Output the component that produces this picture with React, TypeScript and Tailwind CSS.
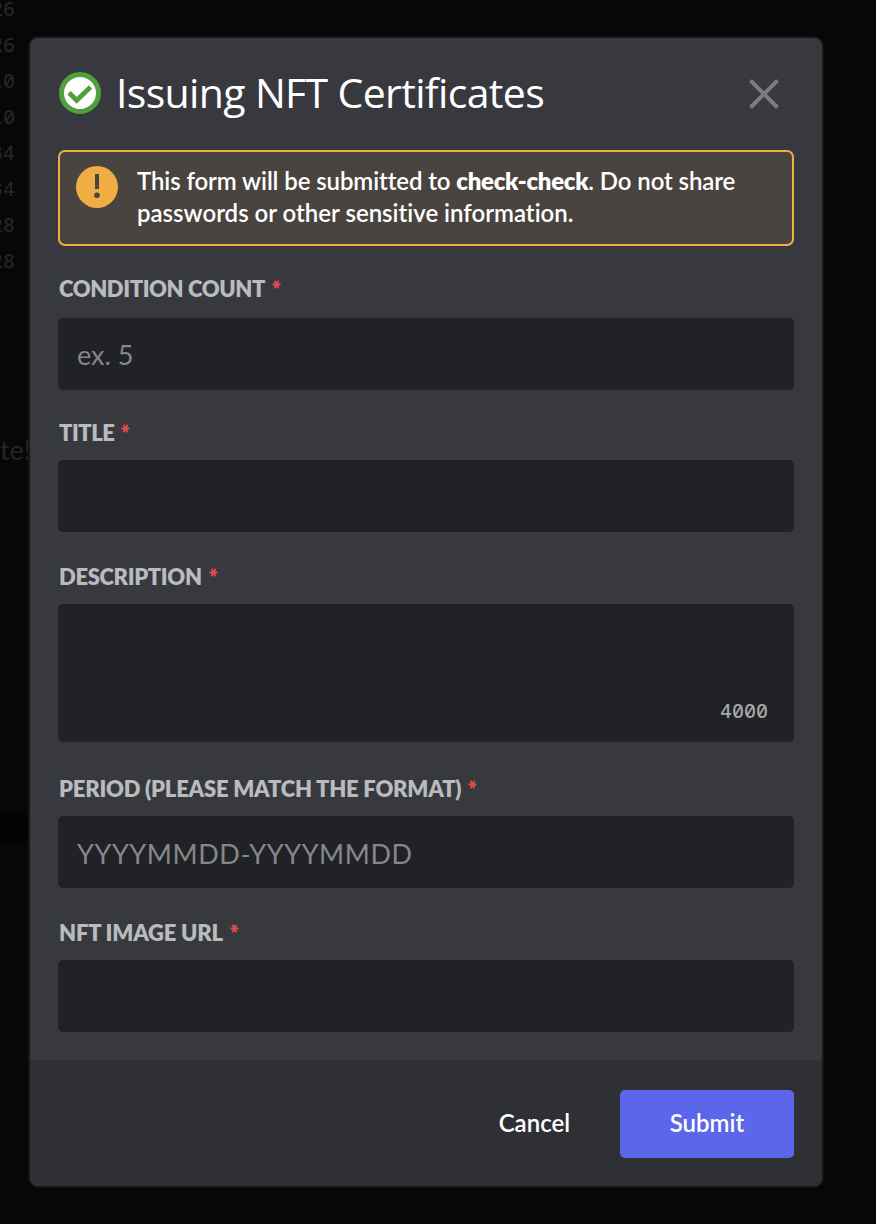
const codeLines = ['26', '26', '10', '10', '34', '34', '28', '28'];

function CheckBadge() {
  return (
    <svg width="42" height="42" viewBox="0 0 42 42" className="-mt-[2px] ml-px shrink-0" aria-hidden="true">
      <circle cx="21" cy="21" r="18.5" fill="#fff" stroke="#52a03d" strokeWidth="5" />
      <path d="M10 20.8 L17.7 28.3 L31.6 15" fill="none" stroke="#52a03d" strokeWidth="4.8" />
    </svg>
  );
}

function WarningIcon() {
  return (
    <svg width="42" height="42" viewBox="0 0 42 42" className="shrink-0" aria-hidden="true">
      <circle cx="21" cy="21" r="21" fill="#f0ad43" />
      <rect x="19" y="8" width="4" height="15" fill="#494440" />
      <circle cx="21" cy="29.2" r="2.8" fill="#494440" />
    </svg>
  );
}

function CloseIcon() {
  return (
    <svg width="30" height="30" viewBox="0 0 30 30" aria-hidden="true">
      <path d="M1.5 1.5 L28.5 28.5 M28.5 1.5 L1.5 28.5" stroke="#7b7c80" strokeWidth="4" />
    </svg>
  );
}

function Label({ text, className }: { text: string; className: string }) {
  return (
    <div className={`flex h-8 items-center pl-px text-[22px] font-extrabold leading-8 text-[#b9bbbe] ${className}`}>
      <span>{text}</span>
      <svg width="9" height="9" viewBox="0 0 9 9" className="-mt-[10px] ml-[7px]" aria-hidden="true">
        <path d="M0.5 4.5H8.5M2.6 0.8L6.4 8.2M6.4 0.8L2.6 8.2" stroke="#de4b48" strokeWidth="1.9" />
      </svg>
    </div>
  );
}

function Field({ placeholder = '', className = '' }: { placeholder?: string; className?: string }) {
  return (
    <div className={`h-[72px] rounded-[5px] bg-[#202225] pl-[19px] text-[27px] text-[#86878b] ${className}`}>
      {placeholder}
    </div>
  );
}

export default function App() {
  return (
    <div className="relative h-[1224px] w-[876px] overflow-hidden bg-[#070707] pl-[30px] pt-[38px] font-[Lato,sans-serif] [font-variant-ligatures:none]">
      <div className="absolute left-0 top-0 h-full w-[30px] overflow-hidden text-[#252526]" aria-hidden="true">
        <div className="-mt-[9px] flex w-[15px] flex-col items-end font-['Noto_Sans_Mono',monospace] text-[20px] font-medium leading-9">
          {codeLines.map((n, i) => (
            <span key={i}>{n}</span>
          ))}
        </div>
        <div className="mt-[153px] text-[27px] leading-9">te!</div>
        <div className="mt-[344px] h-[33px] bg-[#040404]" />
      </div>

      <div className="relative flex h-[1148px] w-[792px] flex-col overflow-hidden rounded-[8px] bg-[#38393e] shadow-[0_0_0_2px_#151618]">
        <div className="flex h-[112px] items-center pl-[28px] pr-[43px]">
          <CheckBadge />
          <h1 className="-mt-[5px] ml-[15px] whitespace-nowrap font-['Open_Sans',sans-serif] text-[41px] leading-[56px] tracking-[-0.65px] text-white">
            Issuing NFT Certificates
          </h1>
          <div className="ml-auto">
            <CloseIcon />
          </div>
        </div>

        <div className="flex flex-col px-[28px]">
          <div className="flex h-[96px] gap-[19px] rounded-[7px] border-2 border-[#f0ad43] bg-[#494440] pl-4 pt-[14px]">
            <WarningIcon />
            <p className="-mt-px whitespace-nowrap text-[24px] font-semibold leading-8 tracking-[-0.1px] text-white">
              This form will be submitted to <b className="font-extrabold tracking-[-0.3px]">check-check</b>. Do not share
              <br />
              <span className="tracking-normal">passwords or other sensitive information.</span>
            </p>
          </div>

          <Label text="CONDITION COUNT" className="mb-[13px] mt-[27px] tracking-[-0.4px]" />
          <Field placeholder="ex. 5" className="leading-[73px]" />
          <Label text="TITLE" className="mb-[11px] mt-[27px] tracking-[-0.5px]" />
          <Field />
          <Label text="DESCRIPTION" className="mb-[11px] mt-[29px] tracking-[-0.35px]" />
          <div className="flex h-[138px] items-end justify-end rounded-[5px] bg-[#202225] pb-4 pr-[26px] font-['Noto_Sans_Mono',monospace] text-[20px] font-medium leading-[30px] text-[#a6a8ab]">
            4000
          </div>
          <Label text="PERIOD (PLEASE MATCH THE FORMAT)" className="mb-[11px] mt-[31px] tracking-[-0.22px]" />
          <Field placeholder="YYYYMMDD-YYYYMMDD" className="leading-[75px] tracking-[0.6px]" />
          <Label text="NFT IMAGE URL" className="mb-[11px] mt-[29px] tracking-[-0.2px]" />
          <Field />
        </div>

        <div className="mt-auto flex h-[126px] items-start justify-end bg-[#2f3035] pr-[28px] pt-[30px] text-[24px] font-semibold text-white">
          <button className="mr-[50px] h-[68px] pb-0.5">Cancel</button>
          <button className="h-[68px] w-[174px] rounded-[5px] bg-[#5b66ea] pb-0.5">Submit</button>
        </div>
      </div>
    </div>
  );
}
